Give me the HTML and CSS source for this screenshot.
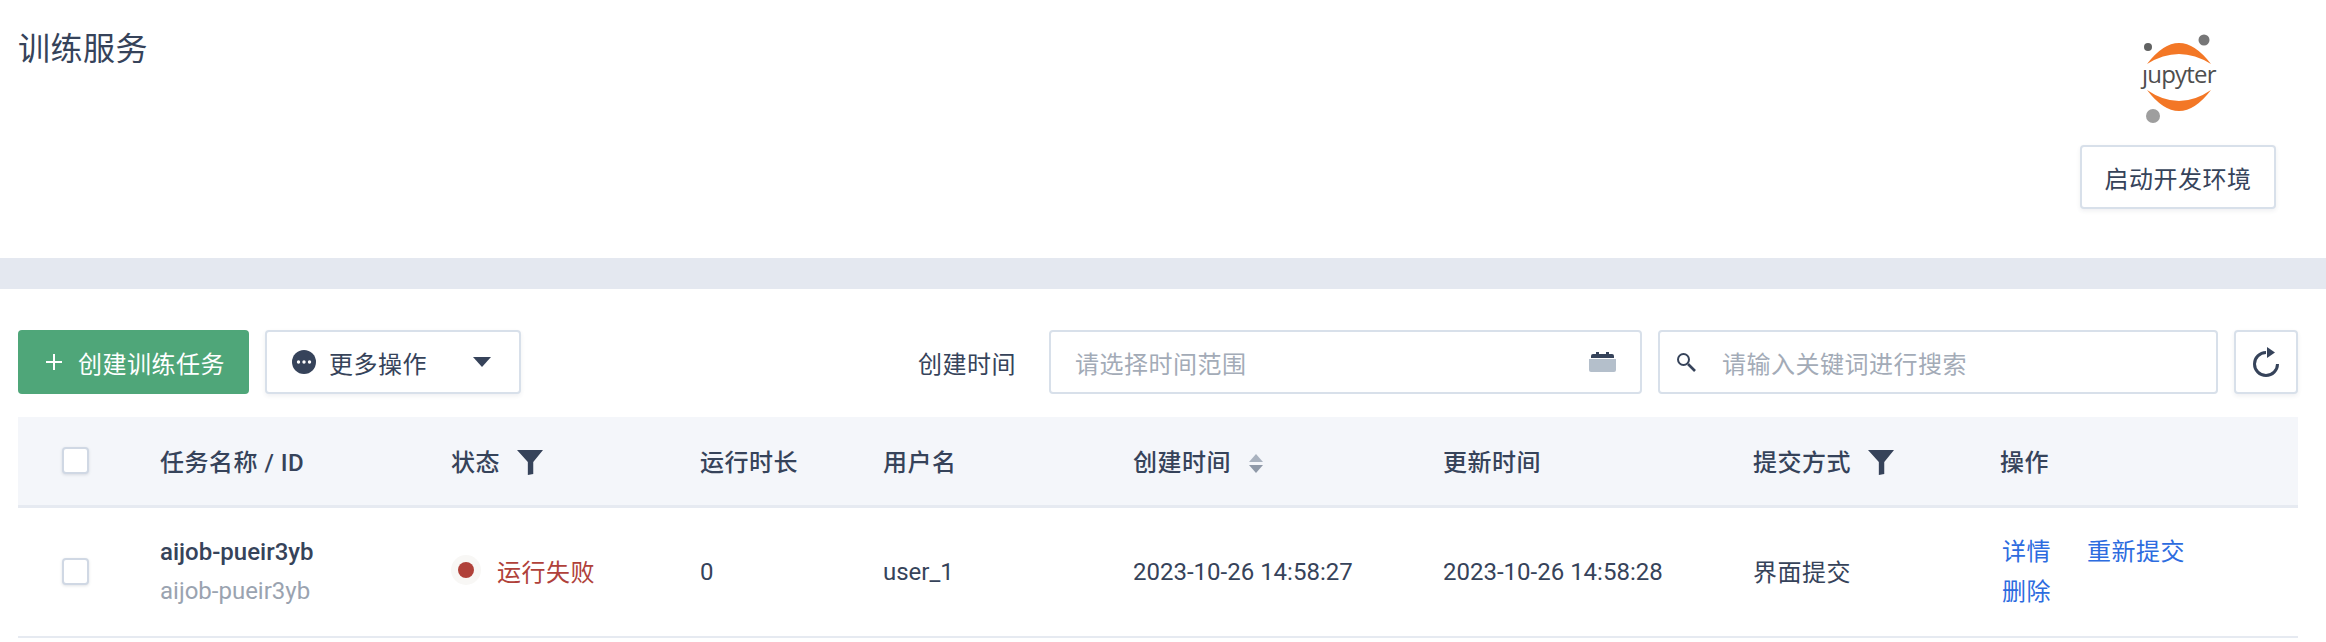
FILE: index.html
```html
<!DOCTYPE html>
<html lang="zh-CN">
<head>
<meta charset="UTF-8">
<title>训练服务</title>
<link rel="stylesheet" href="styles.css">
</head>
<body>
<header class="page-head">
    <h1 class="page-title">训练服务</h1>
    <div class="dev-env">
        <svg class="jupyter-logo" viewBox="0 0 96 94" width="96" height="94">
            <path class="arc" d="M17 33 Q49 -9 81 33 Q49 13 17 33 Z"/>
            <path class="arc" d="M17 59 Q49 101 81 59 Q49 81 17 59 Z"/>
            <circle cx="74" cy="9" r="5.5" fill="#767677"/>
            <circle cx="18" cy="16" r="4" fill="#616262"/>
            <circle cx="23" cy="85" r="7" fill="#9e9e9e"/>
            <text class="logo-text" x="12" y="52" textLength="75">ȷupyter</text>
        </svg>
        <button class="btn dev-btn">启动开发环境</button>
    </div>
</header>
<div class="band"></div>
<main class="content">
    <div class="toolbar">
        <button class="btn btn-primary">
            <svg class="icon-plus" viewBox="0 0 18 18" width="18" height="18"><path d="M9 1v16M1 9h16" stroke="#fff" stroke-width="2" fill="none"/></svg>
            创建训练任务
        </button>
        <button class="btn btn-more">
            <svg viewBox="0 0 24 24" width="24" height="24"><circle cx="12" cy="12" r="12" fill="#36435a"/><circle cx="6.5" cy="12" r="1.7" fill="#fff"/><circle cx="12" cy="12" r="1.7" fill="#fff"/><circle cx="17.500" cy="12" r="1.7" fill="#fff"/></svg>
            <span class="more-label">更多操作</span>
            <svg class="caret" viewBox="0 0 18 10" width="18" height="10"><path d="M0 0h18L9 10z" fill="#36435a"/></svg>
        </button>
        <span class="field-label">创建时间</span>
        <div class="field date-field">
            <span class="placeholder">请选择时间范围</span>
            <svg viewBox="0 0 27 20" width="27" height="20"><path d="M2 6V4a2 2 0 0 1 2-2h3V0h3v2h7V0h3v2h3a2 2 0 0 1 2 2v2z" fill="#36435a"/><path d="M0 7h27v11a2 2 0 0 1-2 2H2a2 2 0 0 1-2-2z" fill="#b4bfcb"/></svg>
        </div>
        <div class="field search-field">
            <svg viewBox="0 0 20 20" width="20" height="20"><circle cx="7.500" cy="7.500" r="5.500" fill="none" stroke="#36435a" stroke-width="2"/><path d="M12 12l7 7" stroke="#36435a" stroke-width="2.600"/></svg>
            <span class="placeholder">请输入关键词进行搜索</span>
        </div>
        <button class="btn btn-refresh">
            <svg viewBox="0 0 27 30" width="27" height="30"><path d="M13 5.500A11.500 11.500 0 1 0 24.500 17" fill="none" stroke="#36435a" stroke-width="3"/><path d="M14 0l8 5.500-8 5.500z" fill="#36435a"/></svg>
        </button>
    </div>

    <table class="job-table">
        <thead>
            <tr>
                <th class="col-check"><span class="checkbox"></span></th>
                <th class="col-name">任务名称 / ID</th>
                <th class="col-status">状态<svg class="filter" viewBox="0 0 24 23" width="26" height="25"><path d="M0 0h24L15 11v11l-5 1V11z" fill="#36435a"/></svg></th>
                <th class="col-time">运行时长</th>
                <th class="col-user">用户名</th>
                <th class="col-created">创建时间<svg class="sort" viewBox="0 0 16 20" width="16" height="20"><path d="M8 0l7 8H1z" fill="#a9b2bf"/><path d="M1 11h14l-7 8z" fill="#8f99a8"/></svg></th>
                <th class="col-updated">更新时间</th>
                <th class="col-submit">提交方式<svg class="filter" viewBox="0 0 24 23" width="26" height="25"><path d="M0 0h24L15 11v11l-5 1V11z" fill="#36435a"/></svg></th>
                <th>操作</th>
            </tr>
        </thead>
        <tbody>
            <tr>
                <td><span class="checkbox"></span></td>
                <td class="latin">
                    <div class="job-name">aijob-pueir3yb</div>
                    <div class="job-id">aijob-pueir3yb</div>
                </td>
                <td class="cjk-cell"><span class="status"><span class="status-dot"></span>运行失败</span></td>
                <td class="latin">0</td>
                <td class="latin">user_1</td>
                <td class="latin">2023-10-26 14:58:27</td>
                <td class="latin">2023-10-26 14:58:28</td>
                <td class="cjk-cell">界面提交</td>
                <td class="actions">
                    <a href="#">详情</a><a href="#">重新提交</a><a href="#">删除</a>
                </td>
            </tr>
        </tbody>
    </table>
</main>
</body>
</html>
```

FILE: styles.css
```css
/* Basic styling */
body {
    margin: 0;
    background: #fff;
    color: #36435a;
    font-family: Roboto, "Noto Sans CJK SC", sans-serif;
    font-size: 24px;
    letter-spacing: 0.5px;
}
.page-head {
    height: 258px;
    box-sizing: border-box;
    padding: 0 50px 0 18px;
    display: flex;
    justify-content: space-between;
}
.page-title {
    margin: 26px 0 0;
    font-size: 32px;
    line-height: 46px;
    font-weight: 400;
}
.dev-env {
    display: flex;
    flex-direction: column;
    align-items: center;
    padding-top: 31px;
}
.jupyter-logo {
    display: block;
    margin-bottom: 20px;
}
.arc {
    fill: #f37726;
}
.logo-text {
    font-family: "Open Sans", sans-serif;
    font-size: 24px;
    fill: #4e4e4e;
}
.band {
    height: 31px;
    background: #e4e8f0;
}

/* Buttons and fields */
.btn {
    font: inherit;
    letter-spacing: inherit;
    color: inherit;
    background: #fff;
    border: 2px solid #d8e0ea;
    border-radius: 4px;
    box-shadow: 0 2px 4px rgba(54, 67, 90, 0.08);
    padding: 0;
    display: flex;
    align-items: center;
    box-sizing: border-box;
}
.dev-btn {
    width: 196px;
    height: 64px;
    justify-content: center;
}
.content {
    padding: 41px 28px 0 18px;
}
.toolbar {
    display: flex;
    align-items: center;
    height: 64px;
}
.btn-primary {
    width: 231px;
    height: 64px;
    padding-left: 27px;
    background: #4fa679;
    border: 0;
    color: #fff;
    box-shadow: none;
}
.icon-plus {
    margin-right: 15px;
}
.btn-more {
    width: 256px;
    height: 64px;
    margin-left: 16px;
    padding-left: 25px;
}
.more-label {
    margin-left: 13px;
}
.caret {
    margin-left: auto;
    margin-right: 28px;
}
.field-label {
    margin-left: auto;
    margin-right: 33px;
}
.field {
    height: 64px;
    box-sizing: border-box;
    border: 2px solid #d8e0ea;
    border-radius: 4px;
    display: flex;
    align-items: center;
}
.placeholder {
    color: #a3abb7;
}
.date-field {
    width: 593px;
    padding: 0 24px 0 24px;
    justify-content: space-between;
}
.search-field {
    width: 560px;
    margin-left: 16px;
    padding-left: 16px;
}
.search-field .placeholder {
    margin-left: 26px;
}
.btn-refresh {
    width: 64px;
    height: 64px;
    margin-left: 16px;
    justify-content: center;
}

/* Job table */
.job-table {
    width: 100%;
    margin-top: 23px;
    border-collapse: collapse;
    table-layout: fixed;
}
.job-table th {
    height: 87px;
    padding: 0 0 1px;
    background: #f4f6fa;
    border-bottom: 3px solid #e6eaf1;
    font-weight: 500;
    text-align: left;
}
.job-table td {
    height: 130px;
    box-sizing: border-box;
    padding: 0;
    border-bottom: 2px solid #e6eaf1;
}
.job-table .latin {
    letter-spacing: 0;
}
.job-table .cjk-cell {
    padding-bottom: 3px;
}
.col-check { width: 142px; }
.col-name { width: 291px; }
.col-status { width: 249px; }
.col-time { width: 183px; }
.col-user { width: 250px; }
.col-created { width: 310px; }
.col-updated { width: 310px; }
.col-submit { width: 247px; }
.checkbox {
    display: block;
    width: 27px;
    height: 27px;
    margin-left: 44px;
    box-sizing: border-box;
    background: #fff;
    border: 2px solid #d0d8e4;
    border-radius: 4px;
    box-shadow: 0 1px 3px rgba(54, 67, 90, 0.15);
}
.filter {
    margin-left: 17px;
    vertical-align: -4px;
}
.sort {
    margin-left: 17px;
    vertical-align: -3px;
}
.job-name {
    font-weight: 500;
    line-height: 39px;
}
.job-id {
    color: #9aa3b0;
    line-height: 39px;
}
.status {
    display: flex;
    align-items: center;
    color: #b0413a;
}
.status-dot {
    width: 16px;
    height: 16px;
    margin: 0 23px 0 7px;
    border-radius: 50%;
    background: #b0413a;
    box-shadow: 0 0 0 7px #f8f7f5;
}
.actions {
    line-height: 40px;
}
.actions a {
    display: inline-block;
    margin-left: 2px;
    color: #2d6cdf;
    text-decoration: none;
}
.actions a:nth-child(2) {
    margin-left: 36px;
}
.actions a:nth-child(3) {
    display: block;
    width: 50px;
}
```
